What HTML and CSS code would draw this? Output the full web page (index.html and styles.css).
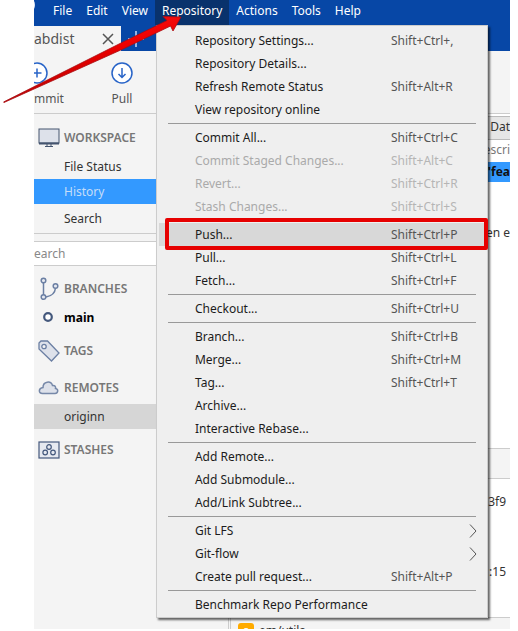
FILE: index.html
```html
<!DOCTYPE html>
<html lang="en">
<head>
<meta charset="utf-8">
<title>Repository menu</title>
<link rel="stylesheet" href="styles.css">
</head>
<body>
<div class="window">
  <nav class="menubar">
    <span class="avatar"></span>
    <button class="menu-title">File</button>
    <button class="menu-title">Edit</button>
    <button class="menu-title">View</button>
    <div class="menu-anchor">
      <button class="menu-title open">Repository</button>
      <div class="menu">
        <button class="item">Repository Settings...<kbd>Shift+Ctrl+,</kbd></button>
        <button class="item">Repository Details...</button>
        <button class="item">Refresh Remote Status<kbd>Shift+Alt+R</kbd></button>
        <button class="item">View repository online</button>
        <hr>
        <button class="item">Commit All...<kbd>Shift+Ctrl+C</kbd></button>
        <button class="item" disabled>Commit Staged Changes...<kbd>Shift+Alt+C</kbd></button>
        <button class="item" disabled>Revert...<kbd>Shift+Ctrl+R</kbd></button>
        <button class="item" disabled>Stash Changes...<kbd>Shift+Ctrl+S</kbd></button>
        <hr>
        <button class="item active">Push...<kbd>Shift+Ctrl+P</kbd><span class="highlight"></span></button>
        <button class="item">Pull...<kbd>Shift+Ctrl+L</kbd></button>
        <button class="item">Fetch...<kbd>Shift+Ctrl+F</kbd></button>
        <hr>
        <button class="item">Checkout...<kbd>Shift+Ctrl+U</kbd></button>
        <hr>
        <button class="item">Branch...<kbd>Shift+Ctrl+B</kbd></button>
        <button class="item">Merge...<kbd>Shift+Ctrl+M</kbd></button>
        <button class="item">Tag...<kbd>Shift+Ctrl+T</kbd></button>
        <button class="item">Archive...</button>
        <button class="item">Interactive Rebase...</button>
        <hr>
        <button class="item">Add Remote...</button>
        <button class="item">Add Submodule...</button>
        <button class="item">Add/Link Subtree...</button>
        <hr>
        <button class="item">Git LFS<svg class="chevron" width="8" height="14" viewBox="0 0 8 14"><path d="M1 .5 7 7 1 13.500"/></svg></button>
        <button class="item">Git-flow<svg class="chevron" width="8" height="14" viewBox="0 0 8 14"><path d="M1 .5 7 7 1 13.500"/></svg></button>
        <button class="item">Create pull request...<kbd>Shift+Alt+P</kbd></button>
        <hr>
        <button class="item">Benchmark Repo Performance</button>
      </div>
    </div>
    <button class="menu-title">Actions</button>
    <button class="menu-title">Tools</button>
    <button class="menu-title">Help</button>
  </nav>

  <div class="tabs">
    <div class="tab">abdist
      <button class="icon-button" aria-label="Close tab"><svg width="12" height="12" viewBox="0 0 12 12"><path d="M1 1 11 11M11 1 1 11" stroke="#555" stroke-width="1.500"/></svg></button>
    </div>
    <button class="icon-button new-tab" aria-label="New tab"><svg width="16" height="16" viewBox="0 0 16 16"><path d="M8 0V16M0 8H16" stroke="#c9d8f2" stroke-width="1.500"/></svg></button>
  </div>

  <div class="toolbar">
    <button class="tool first">
      <svg width="22" height="22" viewBox="0 0 22 22"><circle cx="11" cy="11" r="10"/><path d="M11 6.500V15.500M6.500 11H15.500"/></svg>
      mmit
    </button>
    <button class="tool">
      <svg width="22" height="22" viewBox="0 0 22 22"><circle cx="11" cy="11" r="10"/><path d="M11 6V15.500M7.500 12 11 15.500 14.500 12"/></svg>
      Pull
    </button>
  </div>

  <div class="body">
    <aside class="sidebar">
      <section class="workspace">
        <h2><svg width="22" height="20" viewBox="0 0 22 20"><rect x="1" y="1" width="20" height="14" fill="#dde1ea" stroke="#44546f"/><path d="M1 15.500H21" stroke="#44546f" stroke-width="2"/><path d="M9 16V18M13 16V18M7 18.500H15" stroke="#44546f" fill="none"/></svg>WORKSPACE</h2>
        <a class="row" href="#status">File Status</a>
        <a class="row selected" href="#history">History</a>
        <a class="row" href="#search">Search</a>
      </section>
      <input class="search" type="text" placeholder="earch" aria-label="Search">
      <section class="refs">
        <h2><svg width="22" height="24" viewBox="0 0 22 24" fill="#e6e9f0" stroke="#6b7fa3" stroke-width="1.500"><path d="M5.500 5V18M8 20C14 19 17 16 17.500 11" fill="none"/><circle cx="5.500" cy="3.500" r="2.300"/><circle cx="5.500" cy="20" r="2.300"/><circle cx="17.500" cy="9" r="2.300"/></svg>BRANCHES</h2>
        <a class="row current" href="#main"><svg width="22" height="12" viewBox="0 0 22 12"><circle cx="10" cy="5" r="3.800" fill="#fff" stroke="#44587c" stroke-width="2.200"/></svg>main</a>
      </section>
      <section>
        <h2><svg width="22" height="22" viewBox="0 0 22 22" fill="#dde1ea" stroke="#6b7fa3" stroke-width="1.300"><path d="M1 3 3 1H9.500L21 13 13.500 21 1 9Z"/><circle cx="6" cy="6.500" r="2.200" fill="#f4f4f4"/></svg>TAGS</h2>
      </section>
      <section>
        <h2><svg width="22" height="16" viewBox="0 0 22 16"><path d="M4.500 13.500C0 13.500 .5 8 5 7.500 5 1 13 .5 14.500 5.500 17 5 18 7 17.500 8.500 21 9 20 13.500 17 13.500Z" fill="#dde1ea" stroke="#7688a8" stroke-width="1.500"/></svg>REMOTES</h2>
        <a class="row hovered" href="#originn">originn</a>
      </section>
      <section>
        <h2><svg width="22" height="18" viewBox="0 0 22 18" fill="#e6e9f0" stroke="#44587c" stroke-width="1.200"><rect x="1" y="1" width="20" height="16"/><circle cx="11" cy="6" r="2.300"/><circle cx="7.200" cy="11.500" r="2.300"/><circle cx="15" cy="11.500" r="2.300"/></svg>STASHES</h2>
      </section>
    </aside>
    <main class="content">
      <div class="filter"><span>Dat</span></div>
      <div class="head">escri</div>
      <div class="commit">'fea</div>
      <div class="history">en e</div>
      <div class="splitter"></div>
      <div class="details"><span>3f9</span><span>:15</span></div>
      <div class="file"><svg width="16" height="16" viewBox="0 0 16 16"><rect width="16" height="16" rx="3" fill="#ffab00"/><circle cx="8" cy="8" r="3" fill="#fff"/></svg>em/utils</div>
    </main>
  </div>
</div>
<svg class="pointer" width="186" height="106" viewBox="0 0 186 106">
  <defs><linearGradient id="red" x1="0" y1="0" x2=".4" y2="1"><stop offset="0" stop-color="#f22"/><stop offset=".5" stop-color="#e00"/><stop offset="1" stop-color="#a00"/></linearGradient></defs>
  <path d="M3.500 102 121 43 167 20.500 163 16.500 181 17 173 31 170.500 26 123 49 4 102.500Z" fill="url(#red)" stroke="#a80c12" stroke-width=".8"/>
</svg>
</body>
</html>
```
FILE: styles.css
```css
* { box-sizing: border-box; }

body {
  margin: 0;
  height: 100vh;
  padding: 0 8px 2px 34px;
  background: #fff;
  color: #333;
  font: 12px/20px "Noto Sans", "Open Sans", sans-serif;
  overflow: hidden;
}

button {
  border: 0;
  padding: 0;
  background: none;
  color: inherit;
  font: inherit;
}

.window {
  height: 100%;
  display: flex;
  flex-direction: column;
  background: #f4f4f4;
}

.menubar {
  display: flex;
  height: 26px;
  background: #0747a6;
  color: #fff;
  position: relative;
  z-index: 1;
}

.avatar {
  width: 12px;
  height: 20px;
  overflow: hidden;
}

.avatar::before {
  content: "";
  display: block;
  width: 16px;
  height: 16px;
  margin: -3px 0 0 -15px;
  border-radius: 50%;
  background: #dfe8f6;
}

.menu-title {
  height: 25px;
  padding: 0 7px 4px;
}

.menu-anchor { position: relative; }

.open { background: #09326c; }

.menu {
  position: absolute;
  top: 25px;
  left: 1px;
  width: 332px;
  padding: 3px 2px 1px;
  border: 1px solid #ccc;
  background: #efefef;
  box-shadow: 2px 2px 2px #0009;
  color: #1c1c1c;
}

.item {
  position: relative;
  display: flex;
  align-items: center;
  width: 100%;
  height: 23px;
  padding: 0 8px 0 36px;
  text-align: left;
  white-space: nowrap;
}

.item:disabled { color: #aaa; }

.item kbd {
  width: 86px;
  margin-left: auto;
  font: inherit;
  color: #555;
}

.item:disabled kbd { color: #b5b5b5; }

.active { background: #d8d8d8; }

.highlight {
  position: absolute;
  inset: -5px -3px -4px 6px;
  border: 4px solid #e60000;
  border-radius: 2px;
}

.chevron {
  margin-left: auto;
  fill: none;
  stroke: #555;
}

.menu hr {
  height: 1px;
  margin: 2px 9px;
  border: 0;
  background: #999;
}

.tabs {
  display: flex;
  height: 25px;
  background: #0747a6;
}

.tab {
  display: flex;
  align-items: center;
  justify-content: space-between;
  width: 87px;
  padding-right: 7px;
  background: #f4f4f4;
  color: #555;
  font-size: 14px;
}

.icon-button { display: flex; }

.new-tab { padding: 5px 7px; }

.toolbar {
  display: flex;
  height: 63px;
  padding-top: 11px;
  border-bottom: 1px solid #ccc;
  overflow: hidden;
}

.tool {
  display: flex;
  flex-direction: column;
  align-items: center;
  gap: 5px;
  width: 70px;
  height: 47px;
  color: #555;
}

.tool svg {
  fill: #fff;
  stroke: #2864c8;
  stroke-width: 1.5;
}

.tool.first {
  width: 53px;
  align-items: flex-start;
}

.first svg { margin-left: -8px; }

.body {
  flex: 1;
  min-height: 0;
  display: flex;
}

.sidebar {
  width: 195px;
  border-right: 1px solid #ccc;
}

section { margin-top: 5px; }

.workspace {
  margin: 0;
  padding-top: 8px;
  border-bottom: 1px solid #ccc;
}

.workspace .row:last-child { height: 29px; }

.refs { margin-top: 7px; }

h2 {
  display: flex;
  align-items: center;
  gap: 4px;
  height: 32px;
  margin: 0;
  padding-left: 4px;
  color: #777;
  font-size: 12px;
  font-weight: 600;
}

.row {
  display: flex;
  align-items: center;
  height: 25px;
  padding-left: 30px;
  color: #333;
  text-decoration: none;
}

.selected {
  background: #3399ff;
  color: #c5ddf8;
}

.current {
  gap: 4px;
  padding-left: 4px;
  color: #000;
  font-weight: 700;
}

.hovered { background: #d6d6d6; }

.search {
  display: block;
  width: 100%;
  height: 25px;
  margin-top: 7px;
  padding: 0;
  border: solid #ccc;
  border-width: 1px 0;
  background: #fff;
  font: inherit;
}

.search::placeholder { color: #888; }

.content {
  flex: 1;
  min-width: 0;
  display: flex;
  flex-direction: column;
  margin-left: 1px;
  padding-top: 2px;
  border-left: 1px solid #ccc;
  background: #fff;
  text-align: right;
  white-space: nowrap;
  overflow: hidden;
}

.filter {
  height: 24px;
  border: solid #bbb;
  border-width: 1px 0;
  background: #e6e6e6;
}

.head {
  height: 22px;
  color: #777;
}

.commit {
  height: 20px;
  background: #3399ff;
  color: #111;
  font-weight: 700;
}

.history {
  flex: 1;
  padding-top: 41px;
}

.splitter {
  height: 31px;
  border: solid #ccc;
  border-width: 1px 0;
  background: #f4f4f4;
}

.details {
  display: flex;
  flex-direction: column;
  align-items: flex-end;
  gap: 50px;
  height: 138px;
  padding: 13px 4px 0 0;
}

.file {
  display: flex;
  gap: 5px;
  height: 12px;
  padding: 5px 0 0 7px;
  border-top: 1px solid #ccc;
  background: #f4f4f4;
  line-height: 16px;
  overflow: hidden;
}

.file svg { flex: none; }

.pointer {
  position: absolute;
  top: 0;
  left: 0;
  z-index: 2;
}
```
